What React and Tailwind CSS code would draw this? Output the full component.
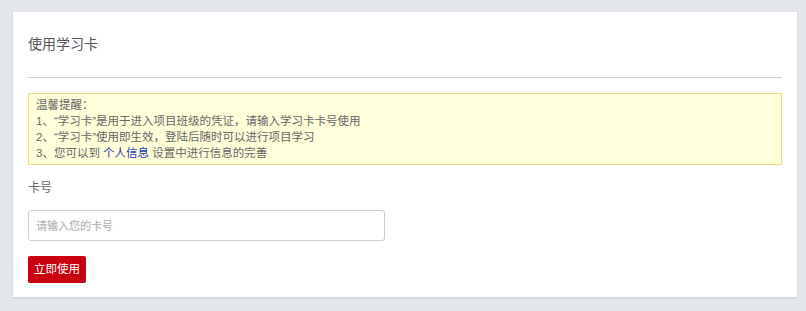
import React from 'react';

const font = { fontFamily: '"Liberation Sans", "Noto Sans CJK SC", sans-serif' };

export default function App() {
  return (
    <div className="h-[311px] w-[806px] bg-[#e3e6ea] pl-[13px] pr-[9px] pt-[12px]" style={font}>
      <div className="h-[285px] bg-white px-[15px] shadow-[0_1px_2px_rgba(0,0,0,0.12)]">
        <div className="pt-[22px] text-[14px] leading-[20px] text-[#555]">使用学习卡</div>
        <div className="mt-[23px] border-t border-[#cfcfcf]" />

        <div className="mt-[15px] border border-[#eedc82] bg-[#ffffd9] px-[7px] py-[3px] text-[11.5px] leading-[16px] text-[#666]">
          <p>温馨提醒：</p>
          <p>1、“学习卡”是用于进入项目班级的凭证，请输入学习卡卡号使用</p>
          <p>2、“学习卡”使用即生效，登陆后随时可以进行项目学习</p>
          <p>
            3、您可以到 <a href="#" className="text-[#1a33b8]">个人信息</a> 设置中进行信息的完善
          </p>
        </div>

        <div className="mt-[15px] text-[12px] leading-[16px] text-[#666]">卡号</div>

        <input
          type="text"
          placeholder="请输入您的卡号"
          className="mt-[14px] block h-[31px] w-[357px] rounded-[3px] border border-[#cccccc] px-[7px] text-[11px] text-[#555] outline-none placeholder:text-[#aaaaaa]"
          style={font}
        />

        <button className="mt-[15px] block h-[27px] w-[58px] rounded-[2px] bg-[#c9000f] text-[11.5px] text-white">
          立即使用
        </button>
      </div>
    </div>
  );
}
